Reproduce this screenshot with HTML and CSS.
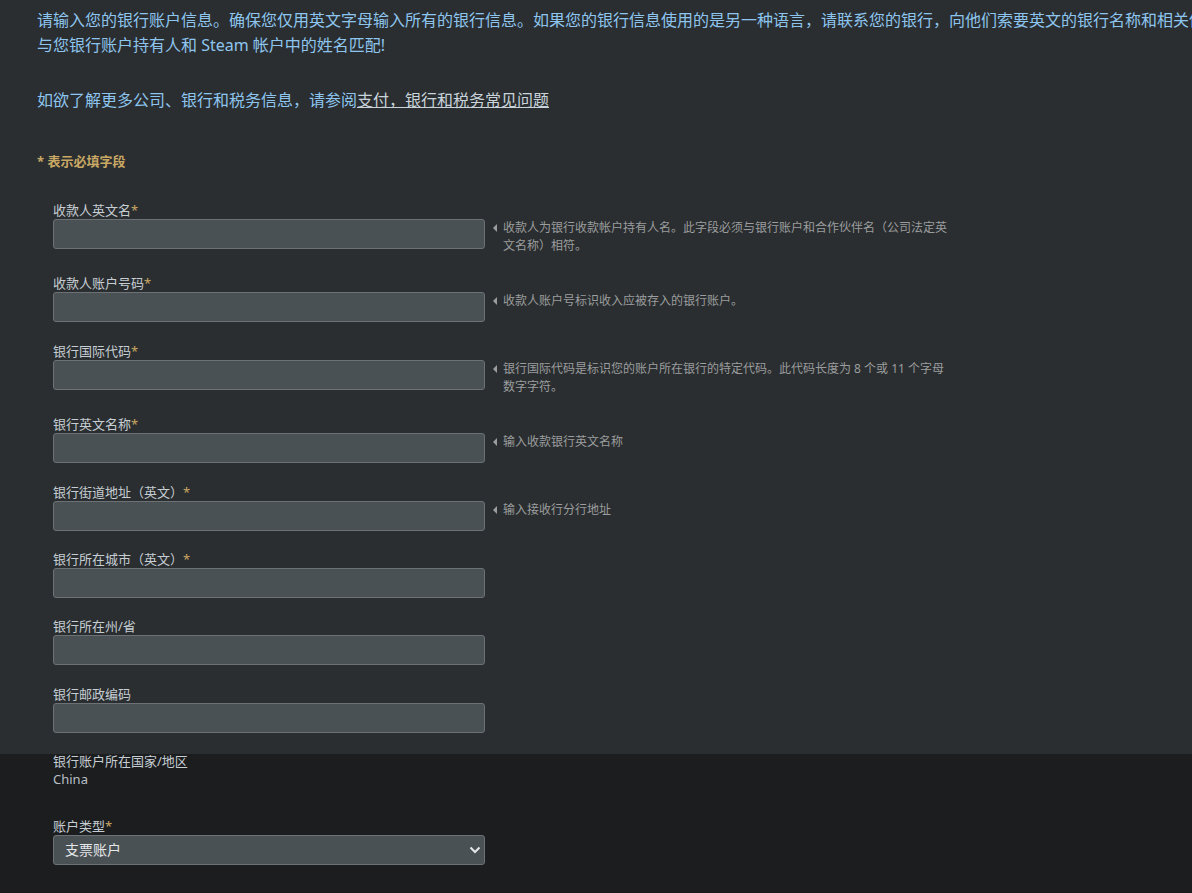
FILE: index.html
```html
<!DOCTYPE html>
<html lang="zh-CN">
<head>
    <meta charset="UTF-8">
    <meta name="viewport" content="width=device-width, initial-scale=1.0">
    <title>银行信息</title>
    <link rel="stylesheet" href="styles.css">
</head>
<body>
    <!-- Bloco principal do formulário bancário -->
    <div class="bank-section">
        <div class="intro">
            <p class="intro-line">请输入您的银行账户信息。确保您仅用英文字母输入所有的银行信息。如果您的银行信息使用的是另一种语言，请联系您的银行，向他们索要英文的银行名称和相关信息。银行账户名称必须</p>
            <p class="intro-line">与您银行账户持有人和 Steam 帐户中的姓名匹配!</p>
            <p class="intro-faq">如欲了解更多公司、银行和税务信息，请参阅<a href="#">支付，银行和税务常见问题</a></p>
        </div>

        <div class="required-note">* 表示必填字段</div>

        <div class="fields">
            <div class="field">
                <label>收款人英文名<span class="req">*</span></label>
                <div class="field-body">
                    <input type="text" class="text-input">
                    <div class="help">收款人为银行收款帐户持有人名。此字段必须与银行账户和合作伙伴名（公司法定英文名称）相符。</div>
                </div>
            </div>

            <div class="field">
                <label>收款人账户号码<span class="req">*</span></label>
                <div class="field-body">
                    <input type="text" class="text-input">
                    <div class="help">收款人账户号标识收入应被存入的银行账户。</div>
                </div>
            </div>

            <div class="field">
                <label>银行国际代码<span class="req">*</span></label>
                <div class="field-body">
                    <input type="text" class="text-input">
                    <div class="help">银行国际代码是标识您的账户所在银行的特定代码。此代码长度为 8 个或 11 个字母数字字符。</div>
                </div>
            </div>

            <div class="field">
                <label>银行英文名称<span class="req">*</span></label>
                <div class="field-body">
                    <input type="text" class="text-input">
                    <div class="help">输入收款银行英文名称</div>
                </div>
            </div>

            <div class="field">
                <label>银行街道地址（英文）<span class="req">*</span></label>
                <div class="field-body">
                    <input type="text" class="text-input">
                    <div class="help">输入接收行分行地址</div>
                </div>
            </div>

            <div class="field">
                <label>银行所在城市（英文）<span class="req">*</span></label>
                <div class="field-body">
                    <input type="text" class="text-input">
                </div>
            </div>

            <div class="field">
                <label>银行所在州/省</label>
                <div class="field-body">
                    <input type="text" class="text-input">
                </div>
            </div>

            <div class="field">
                <label>银行邮政编码</label>
                <div class="field-body">
                    <input type="text" class="text-input">
                </div>
            </div>
        </div>
    </div>

    <!-- Bloco escuro: país e tipo de conta -->
    <div class="account-section">
        <div class="country">
            <div class="country-label">银行账户所在国家/地区</div>
            <div class="country-value">China</div>
        </div>

        <div class="field">
            <label>账户类型<span class="req">*</span></label>
            <div class="select-wrap">
                <select class="select-input">
                    <option>支票账户</option>
                    <option>储蓄账户</option>
                </select>
                <svg class="chevron" width="12" height="8" viewBox="0 0 12 8">
                    <path d="M1.5 1.5 L6 6 L10.5 1.5" fill="none" stroke="#e4e6e8" stroke-width="2"/>
                </svg>
            </div>
        </div>
    </div>
</body>
</html>
```

FILE: styles.css
```css
* {
    margin: 0;
    padding: 0;
    box-sizing: border-box;
}

html, body {
    overflow: hidden;
}

body {
    font-family: "Noto Sans", "Noto Sans CJK SC", sans-serif;
    background-color: #1b1d1f;
    color: #c6cdd3;
    min-height: 100vh;
}

/* Bloco principal */
.bank-section {
    background-color: #2a2e30;
    padding: 8px 0 21px 37px;
}

.intro {
    width: 1300px;
}

.intro-line {
    font-size: 16px;
    line-height: 25px;
    color: #8ec5ee;
    white-space: nowrap;
}

.intro-faq {
    margin-top: 30px;
    font-size: 16px;
    line-height: 25px;
    color: #8ec5ee;
}

.intro-faq a {
    color: #c9d3da;
    text-decoration: underline;
}

.required-note {
    margin-top: 40px;
    font-size: 13px;
    line-height: 16px;
    font-weight: bold;
    color: #c9a864;
}

.fields {
    margin-top: 33px;
    padding-left: 16px;
}

.field {
    margin-bottom: 20.4px;
}

.fields .field:last-child {
    margin-bottom: 0;
}

.field label {
    display: block;
    font-size: 13px;
    line-height: 17px;
    color: #c6cdd3;
}

.req {
    color: #c9a864;
}

.field-body {
    display: flex;
    align-items: flex-start;
}

.text-input {
    width: 432px;
    height: 30px;
    flex-shrink: 0;
    background-color: #4a5154;
    border: 1px solid #6b7174;
    border-radius: 3px;
    color: #e4e6e8;
    font-size: 14px;
    padding: 0 10px;
}

.help {
    position: relative;
    width: 455px;
    margin-left: 8px;
    padding-left: 10px;
    font-size: 12px;
    line-height: 18px;
    color: #9b9d9e;
}

/* setinha apontando para o campo */
.help::before {
    content: "";
    position: absolute;
    left: 0;
    top: 5px;
    border-top: 4px solid transparent;
    border-bottom: 4px solid transparent;
    border-right: 4px solid #9b9d9e;
}

/* Bloco escuro */
.account-section {
    padding: 0 0 30px 53px;
}

.country {
    margin-bottom: 29px;
}

.country-label {
    font-size: 13px;
    line-height: 15px;
    color: #c6cdd3;
}

.country-value {
    font-size: 13px;
    line-height: 20px;
    color: #b8bfc4;
}

.select-wrap {
    position: relative;
    width: 432px;
}

.select-input {
    width: 432px;
    height: 30px;
    background-color: #4a5154;
    border: 1px solid #6b7174;
    border-radius: 3px;
    color: #e4e6e8;
    font-family: "Noto Sans", "Noto Sans CJK SC", sans-serif;
    font-size: 14px;
    padding: 0 11px;
    appearance: none;
    -webkit-appearance: none;
}

.chevron {
    position: absolute;
    right: 4px;
    top: 11px;
    pointer-events: none;
}
```
